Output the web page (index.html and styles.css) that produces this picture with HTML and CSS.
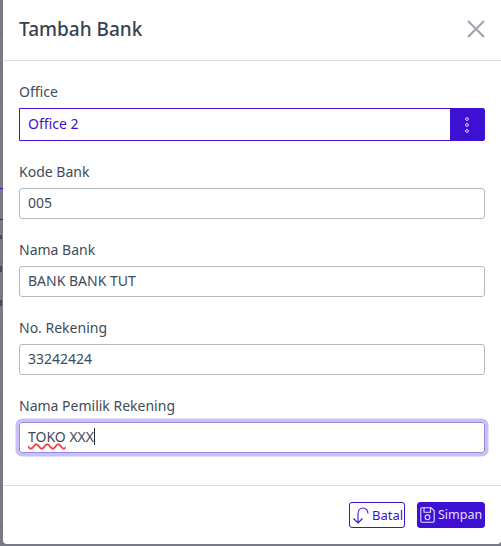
FILE: index.html
```
<!DOCTYPE html>
<html lang="id">
<head>
<meta charset="utf-8">
<title>Tambah Bank</title>
<link rel="stylesheet" href="styles.css">
</head>
<body>
<div class="backdrop"></div>
<div class="modal">
  <header class="modal-header">
    <h1 class="modal-title">Tambah Bank</h1>
    <svg class="close" viewBox="0 0 18 18" aria-label="Tutup"><path d="M1 1 17 17M17 1 1 17"/></svg>
  </header>
  <div class="modal-body">
    <div class="field">
      <div class="label">Office</div>
      <div class="select">
        <div class="select-value">Office 2</div>
        <div class="select-btn">
          <svg viewBox="0 0 6 18" class="dots"><circle cx="3" cy="3" r="1.4"/><circle cx="3" cy="9" r="1.4"/><circle cx="3" cy="15" r="1.4"/></svg>
        </div>
      </div>
    </div>
    <div class="field">
      <div class="label">Kode Bank</div>
      <div class="input">005</div>
    </div>
    <div class="field">
      <div class="label">Nama Bank</div>
      <div class="input">BANK BANK TUT</div>
    </div>
    <div class="field">
      <div class="label">No. Rekening</div>
      <div class="input">33242424</div>
    </div>
    <div class="field last">
      <div class="label">Nama Pemilik Rekening</div>
      <div class="input focused"><span class="misspelled">TOKO</span>&nbsp;XXX<span class="caret"></span></div>
    </div>
  </div>
  <footer class="modal-footer">
    <button class="btn btn-outline">
      <svg class="icon icon-back" viewBox="0 0 17 17"><path d="M6 16 1.500 11.500M6 16l4.500-4.500M6 16V7C6 3.500 8 1 11 1s5 2.500 5 5.500"/></svg>
      <span>Batal</span>
    </button>
    <button class="btn btn-solid">
      <svg class="icon icon-save" viewBox="0 0 15 16"><path d="M2 .8h9.200l3 3V14a1.200 1.200 0 0 1-1.200 1.200H2A1.200 1.200 0 0 1 .8 14V2A1.200 1.200 0 0 1 2 .8zM4 .8v4.400h6.500V.8"/><circle cx="7.500" cy="10.300" r="2.400"/></svg>
      <span>Simpan</span>
    </button>
  </footer>
</div>
</body>
</html>
```
FILE: styles.css
```
* { box-sizing: border-box; }
html, body { margin: 0; height: 546px; overflow: hidden; }
body {
  display: flex;
  align-items: flex-start;
  background: #7a7a84;
  font-family: "Noto Sans", sans-serif;
  font-size: 14px;
  color: #374151;
}
.backdrop {
  width: 3px;
  height: 546px;
  flex: none;
  background:
    linear-gradient(#3d10d3, #3d10d3) 0 188px / 3px 1px no-repeat,
    linear-gradient(#3d10d3, #3d10d3) 0 219px / 3px 1px no-repeat,
    linear-gradient(#4a4a54, #4a4a54) 0 235px / 2px 4px no-repeat,
    linear-gradient(#4a4a54, #4a4a54) 0 266px / 2px 6px no-repeat,
    linear-gradient(#4a4a54, #4a4a54) 0 300px / 2px 6px no-repeat,
    repeating-linear-gradient(#7a7a84 0 32px, #70707a 32px 33px);
}
.modal {
  flex: 1;
  height: 544px;
  background: #fff;
  border-radius: 0 0 4px 4px;
  display: flex;
  flex-direction: column;
}
.modal-header {
  height: 61px;
  flex: none;
  border-bottom: 1px solid #dcdde0;
  padding: 0 16px 2px;
  display: flex;
  align-items: center;
  justify-content: space-between;
}
.modal-title {
  margin: 0;
  font-size: 19px;
  font-weight: 500;
  line-height: 28px;
  color: #374151;
}
.close {
  width: 18px;
  height: 18px;
  fill: none;
  stroke: #9ca3af;
  stroke-width: 2;
}
.modal-body {
  flex: 1;
  padding: 20px 16px 0;
  border-bottom: 1px solid #dcdde0;
}
.field { margin-bottom: 20px; }
.label {
  line-height: 21px;
  margin-bottom: 6px;
  color: #414b5a;
}
.input {
  height: 31px;
  border: 1px solid #b4b8c0;
  border-radius: 3px;
  padding: 0 8px 2px;
  display: flex;
  align-items: center;
  line-height: 21px;
  color: #414b5a;
  white-space: pre;
}
.input.focused {
  border-color: #9a88e8;
  box-shadow: 0 0 0 3.500px #c9bff2;
}
.misspelled {
  text-decoration: underline wavy #f0454f 1.500px;
  text-underline-offset: 1px;
}
.caret {
  width: 1px;
  height: 17px;
  background: #1f2937;
}
.select {
  height: 33px;
  border: 1px solid #3d10d3;
  display: flex;
  border-radius: 0 2px 2px 0;
}
.select-value {
  flex: 1;
  padding: 0 8px;
  line-height: 29px;
  color: #3d10d3;
}
.select-btn {
  width: 34px;
  background: #3d10d3;
  display: flex;
  align-items: center;
  justify-content: center;
}
.dots {
  width: 6px;
  height: 18px;
  fill: none;
  stroke: #d8d0f8;
  stroke-width: 1;
}
.modal-footer {
  flex: none;
  height: 58px;
  padding: 16px;
  display: flex;
  justify-content: flex-end;
  gap: 12px;
}
.btn {
  height: 26px;
  margin: 0;
  padding: 0 2px;
  border-radius: 3px;
  border: 1px solid #3d10d3;
  display: flex;
  align-items: center;
  gap: 3px;
  font: inherit;
  font-size: 13px;
  line-height: 20px;
}
.btn-outline { width: 56px; background: #fff; color: #3d10d3; }
.btn-solid { width: 68px; background: #3d10d3; color: #e4dffb; gap: 3px; font-size: 12.500px; }
.icon {
  flex: none;
  fill: none;
  stroke: currentColor;
  stroke-width: 1.100;
}
.icon-back { width: 17px; height: 17px; }
.icon-save { width: 15px; height: 16px; }
```
